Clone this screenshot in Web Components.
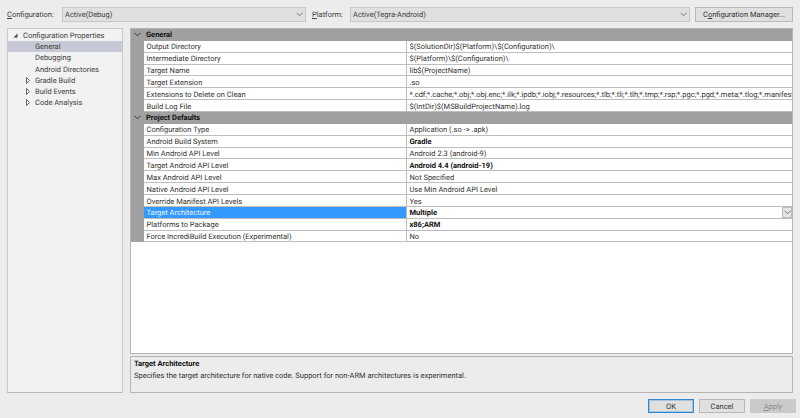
<!DOCTYPE html>
<html>
<head>
<meta charset="utf-8">
<title>Property Pages</title>
<style>
    html, body { margin: 0; height: 100%; }
    body {
        background: #ececec;
        color: #1e1e1e;
        font: 7.5px Roboto, "Open Sans", sans-serif;
        text-rendering: geometricPrecision;
        overflow: hidden;
    }
</style>
</head>
<body>
<property-pages></property-pages>
<script>
const CHEVRON = `<svg width="7" height="5" viewBox="0 0 7 5"><path d="M.5 .8 3.5 3.8 6.5 .8" fill="none" stroke="currentColor" stroke-width="1"/></svg>`;

class VsCombo extends HTMLElement {
    constructor() {
        super();
        this.attachShadow({ mode: 'open' });
        this.shadowRoot.innerHTML = `
            <style>
                :host {
                    display: flex;
                    align-items: center;
                    justify-content: space-between;
                    box-sizing: border-box;
                    height: 15px;
                    padding: 0 2px 0 2px;
                    background: #e0e0e0;
                    border: 1px solid #c6c6c6;
                    color: #3c3c3c;
                    white-space: nowrap;
                }
                span { display: flex; color: #777; }
            </style>
            <slot></slot>
            <span>${CHEVRON}</span>
        `;
    }
}
customElements.define('vs-combo', VsCombo);

class VsButton extends HTMLElement {
    constructor() {
        super();
        this.attachShadow({ mode: 'open' });
        this.shadowRoot.innerHTML = `
            <style>
                :host {
                    display: flex;
                    align-items: center;
                    justify-content: center;
                    box-sizing: border-box;
                    height: 14px;
                    background: #e0e0e0;
                    border: 1px solid #b8b8b8;
                    color: #333;
                    white-space: nowrap;
                }
                :host([primary]) { border-color: #2f86d4; box-shadow: inset 0 0 0 1px rgba(60, 143, 216, .35); }
                :host([disabled]) { background: #cacaca; border-color: #cacaca; color: #8a8a8a; }
            </style>
            <slot></slot>
        `;
    }
}
customElements.define('vs-button', VsButton);

class TreeItem extends HTMLElement {
    constructor() {
        super();
        this.attachShadow({ mode: 'open' });
    }

    connectedCallback() {
        const glyph = this.getAttribute('glyph');
        let icon = '';
        if (glyph === 'open') icon = '<svg width="5" height="5" viewBox="0 0 5 5"><path d="M4.5 .5V4.5H.5Z" fill="#444"/></svg>';
        if (glyph === 'closed') icon = '<svg width="4" height="7" viewBox="0 0 4 7"><path d="M.5 .5 3.5 3.5 .5 6.5Z" fill="none" stroke="#666"/></svg>';
        this.shadowRoot.innerHTML = `
            <style>
                :host {
                    display: flex;
                    align-items: center;
                    height: 11.3px;
                    color: #404040;
                    white-space: nowrap;
                }
                :host([selected]) { background: #c8c9d6; }
                i { display: flex; justify-content: center; align-items: center; flex: none; width: 10px; margin-left: var(--glyph-left, 14.5px); margin-right: 2.5px; }
                :host([root]) { --glyph-left: 2.5px; }
            </style>
            <i>${icon}</i>
            <slot></slot>
        `;
    }
}
customElements.define('tree-item', TreeItem);

class PropRow extends HTMLElement {
    constructor() {
        super();
        this.attachShadow({ mode: 'open' });
    }

    connectedCallback() {
        const combo = this.hasAttribute('combo');
        this.shadowRoot.innerHTML = `
            <style>
                :host {
                    display: grid;
                    grid-template-columns: 263px 1fr;
                    height: 11.86px;
                    box-sizing: border-box;
                    background: #fff;
                    border-bottom: 1px solid #bdbdbd;
                    color: #333;
                    white-space: nowrap;
                    line-height: 11px;
                }
                div { overflow: hidden; padding: .6px 0 0 2.5px; position: relative; }
                .name { border-right: 1px solid #bdbdbd; }
                :host([selected]) .name { background: #3399ff; color: #e8f3ff; }
                :host([bold]) .value { font-weight: 700; color: #111; }
                .drop {
                    position: absolute; right: 0; top: 0; width: 10px; height: 10.8px;
                    padding: 0; box-sizing: border-box;
                    display: flex; align-items: center; justify-content: center;
                    background: #e4e4e4; border: 1px solid #bbb; color: #777;
                }
            </style>
            <div class="name">${this.getAttribute('name')}</div>
            <div class="value"><slot></slot>${combo ? `<div class="drop">${CHEVRON}</div>` : ''}</div>
        `;
    }
}
customElements.define('prop-row', PropRow);

class PropGroup extends HTMLElement {
    constructor() {
        super();
        this.attachShadow({ mode: 'open' });
        this.shadowRoot.innerHTML = `
            <style>
                :host { display: block; background: #a0a0a0; }
                header {
                    display: flex;
                    align-items: center;
                    height: 11.86px;
                    font-weight: 700;
                    color: #111;
                }
                header span { display: flex; justify-content: center; width: 13px; color: #333; margin-right: 2px; }
                .rows { margin-left: 13px; }
            </style>
            <header><span>${CHEVRON}</span><slot name="title"></slot></header>
            <div class="rows"><slot></slot></div>
        `;
    }
}
customElements.define('prop-group', PropGroup);

class DescPane extends HTMLElement {
    constructor() {
        super();
        this.attachShadow({ mode: 'open' });
        this.shadowRoot.innerHTML = `
            <style>
                :host {
                    display: block;
                    box-sizing: border-box;
                    height: 37px;
                    padding: 1px 3px;
                    background: #ececec;
                    border: 1px solid #b4b4b4;
                    color: #333;
                    line-height: 11.5px;
                }
                b { display: block; color: #111; }
            </style>
            <b><slot name="title"></slot></b>
            <slot></slot>
        `;
    }
}
customElements.define('desc-pane', DescPane);

class PropertyPages extends HTMLElement {
    constructor() {
        super();
        this.attachShadow({ mode: 'open' });
        this.shadowRoot.innerHTML = `
            <style>
                :host {
                    display: grid;
                    grid-template-rows: 15px 365px 14px;
                    row-gap: 6px;
                    box-sizing: border-box;
                    width: 800px;
                    height: 418px;
                    padding: 7px 7px 0 7px;
                }
                u { text-underline-offset: 1px; }
                .top { display: flex; align-items: center; color: #3c3c3c; white-space: nowrap; }
                .top span:first-child { width: 55px; }
                .top vs-combo:nth-of-type(1) { width: 244px; }
                .top .plat { width: 44px; padding-left: 6px; box-sizing: border-box; }
                .top vs-combo:nth-of-type(2) { width: 340px; }
                .top vs-button { width: 98px; height: 15px; margin-left: 5px; }
                .main { display: grid; grid-template-columns: 116px 1fr; column-gap: 7px; }
                .tree {
                    box-sizing: border-box;
                    padding-top: .5px;
                    background: #f2f2f2;
                    border: 1px solid #c8c8c8;
                    border-bottom-color: #b8b8b8;
                }
                .right { display: flex; flex-direction: column; gap: 2px; }
                .grid {
                    flex: 1;
                    background: #fff;
                    border: 1px solid #b4b4b4;
                    overflow: hidden;
                }
                .actions { display: flex; justify-content: flex-end; gap: 5px; margin-right: -3px; }
                .actions vs-button { width: 46px; }
            </style>
            <div class="top">
                <span><u>C</u>onfiguration:</span>
                <vs-combo>Active(Debug)</vs-combo>
                <span class="plat"><u>P</u>latform:</span>
                <vs-combo>Active(Tegra-Android)</vs-combo>
                <vs-button>C<u>o</u>nfiguration Manager...</vs-button>
            </div>
            <div class="main">
                <div class="tree">
                    <tree-item root glyph="open">Configuration Properties</tree-item>
                    <tree-item selected>General</tree-item>
                    <tree-item>Debugging</tree-item>
                    <tree-item>Android Directories</tree-item>
                    <tree-item glyph="closed">Gradle Build</tree-item>
                    <tree-item glyph="closed">Build Events</tree-item>
                    <tree-item glyph="closed">Code Analysis</tree-item>
                </div>
                <div class="right">
                    <div class="grid">
                        <prop-group>
                            <span slot="title">General</span>
                            <prop-row name="Output Directory">$(SolutionDir)$(Platform)\\$(Configuration)\\</prop-row>
                            <prop-row name="Intermediate Directory">$(Platform)\\$(Configuration)\\</prop-row>
                            <prop-row name="Target Name">lib$(ProjectName)</prop-row>
                            <prop-row name="Target Extension">.so</prop-row>
                            <prop-row name="Extensions to Delete on Clean">*.cdf;*.cache;*.obj;*.obj.enc;*.ilk;*.ipdb;*.iobj;*.resources;*.tlb;*.tli;*.tlh;*.tmp;*.rsp;*.pgc;*.pgd;*.meta;*.tlog;*.manifest</prop-row>
                            <prop-row name="Build Log File">$(IntDir)$(MSBuildProjectName).log</prop-row>
                        </prop-group>
                        <prop-group>
                            <span slot="title">Project Defaults</span>
                            <prop-row name="Configuration Type">Application (.so -&gt; .apk)</prop-row>
                            <prop-row name="Android Build System" bold>Gradle</prop-row>
                            <prop-row name="Min Android API Level">Android 2.3 (android-9)</prop-row>
                            <prop-row name="Target Android API Level" bold>Android 4.4 (android-19)</prop-row>
                            <prop-row name="Max Android API Level">Not Specified</prop-row>
                            <prop-row name="Native Android API Level">Use Min Android API Level</prop-row>
                            <prop-row name="Override Manifest API Levels">Yes</prop-row>
                            <prop-row name="Target Architecture" bold selected combo>Multiple</prop-row>
                            <prop-row name="Platforms to Package" bold>x86;ARM</prop-row>
                            <prop-row name="Force IncrediBuild Execution (Experimental)">No</prop-row>
                        </prop-group>
                    </div>
                    <desc-pane>
                        <span slot="title">Target Architecture</span>
                        Specifies the target architecture for native code. Support for non-ARM architectures is experimental.
                    </desc-pane>
                </div>
            </div>
            <div class="actions">
                <vs-button primary>OK</vs-button>
                <vs-button>Cancel</vs-button>
                <vs-button disabled><u>A</u>pply</vs-button>
            </div>
        `;
    }
}
customElements.define('property-pages', PropertyPages);
</script>
</body>
</html>
